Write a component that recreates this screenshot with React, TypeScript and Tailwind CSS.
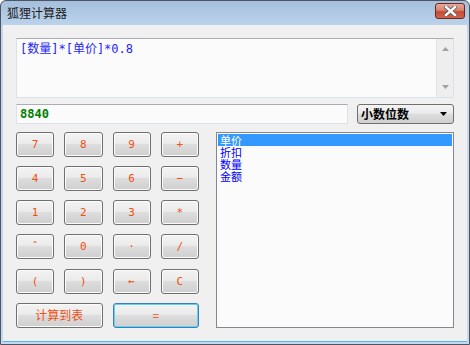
const keys = [
  ["7", "8", "9", "+"],
  ["4", "5", "6", "−"],
  ["1", "2", "3", "*"],
  ["ˆ", "0", "·", "/"],
  ["(", ")", "←", "C"],
];

const fields = ["单价", "折扣", "数量", "金额"];

const mono = { fontFamily: '"DejaVu Sans Mono", "Noto Sans CJK SC", monospace' };
const cjk = { fontFamily: '"Noto Sans CJK SC", "DejaVu Sans", sans-serif' };

function Key({ label, wide, focused }: { label: string; wide?: boolean; focused?: boolean }) {
  return (
    <button
      className={
        "h-[25px] rounded-[3px] border leading-none text-[#f24f12] bg-[linear-gradient(to_bottom,#f3f3f3_0%,#ebebeb_45%,#dddddd_50%,#cfcfcf_100%)] " +
        (focused
          ? "border-[#3c7fb1] shadow-[inset_0_0_0_1px_#5fd3f8] "
          : "border-[#707070] shadow-[inset_0_0_0_1px_#fbfbfb] ") +
        (wide ? "col-span-2 text-[12px]" : "text-[11px]")
      }
      style={wide ? cjk : mono}
    >
      {label}
    </button>
  );
}

export default function App() {
  return (
    <div className="w-[470px] h-[345px] flex flex-col rounded-t-[6px] border border-[#4b5563] bg-[linear-gradient(to_bottom,#a5bfdc,#bcd3ec_25px,#c4d8ee_26px)] overflow-hidden">
      {/* title bar */}
      <div className="h-[24px] flex items-center justify-between pl-[6px] pr-[4px]">
        <span className="text-[12px] text-[#1a1a1a]" style={cjk}>
          狐狸计算器
        </span>
        <div className="w-[30px] h-[16px] mt-[-4px] rounded-[3px] border border-[#6b2a20] flex items-center justify-center bg-[linear-gradient(to_bottom,#e9a99a_0%,#d88170_45%,#c64a33_55%,#d0654c_100%)]">
          <svg width="13" height="10" viewBox="0 0 13 10">
            <path d="M2 1 L11 9 M11 1 L2 9" stroke="#5a5a5a" strokeWidth="4" strokeLinecap="square" />
            <path d="M2 1 L11 9 M11 1 L2 9" stroke="#ffffff" strokeWidth="2.4" strokeLinecap="square" />
          </svg>
        </div>
      </div>

      {/* client area */}
      <div className="flex-1 mx-[2px] mb-[2px] bg-[#f0f0f0] px-[13px] pt-[13px] flex flex-col gap-[6px] border-b border-[#54b6e6]">
        {/* expression box */}
        <div className="h-[60px] flex border border-[#dbe1e8] border-t-[#abadb3] bg-[#fbfbfb]">
          <div className="flex-1 px-[3px] pt-[1px] text-[12px] text-[#1f1fff]" style={mono}>
            [数量]*[单价]*0.8
          </div>
          <div className="w-[17px] flex flex-col items-center justify-between py-[8px] bg-[#eeeeee] border-l border-[#e2e2e2]">
            <svg width="7" height="4" viewBox="0 0 7 4">
              <path d="M0 4 L3.5 0 L7 4 Z" fill="#a0a0a0" />
            </svg>
            <svg width="7" height="4" viewBox="0 0 7 4">
              <path d="M0 0 L3.5 4 L7 0 Z" fill="#a0a0a0" />
            </svg>
          </div>
        </div>

        {/* result + dropdown */}
        <div className="flex gap-[9px] h-[20px]">
          <div className="flex-1 flex items-center px-[3px] border border-[#dbe1e8] border-t-[#abadb3] bg-[#fbfbfb]">
            <span className="text-[12px] font-bold text-[#008000]" style={mono}>
              8840
            </span>
          </div>
          <div className="w-[97px] flex items-center justify-between pl-[3px] pr-[6px] rounded-[3px] border border-[#707070] bg-[linear-gradient(to_bottom,#f3f3f3_0%,#ebebeb_45%,#dddddd_50%,#cfcfcf_100%)]">
            <span className="text-[12px] font-bold text-black" style={cjk}>
              小数位数
            </span>
            <svg width="7" height="4" viewBox="0 0 7 4">
              <path d="M0 0 L3.5 4 L7 0 Z" fill="#000000" />
            </svg>
          </div>
        </div>

        {/* keypad + field list */}
        <div className="flex gap-[17px] mt-[2px]">
          <div className="w-[183px] grid grid-cols-4 gap-x-[10px] gap-y-[9px]">
            {keys.flat().map((k, i) => (
              <Key key={i} label={k} />
            ))}
            <Key label="计算到表" wide />
            <Key label="=" wide focused />
          </div>
          <div className="flex-1 h-[196px] border border-[#828790] bg-[#fbfbfb] p-[1px]">
            {fields.map((f, i) => (
              <div
                key={f}
                className={
                  "h-[12px] pl-[2px] text-[11px] leading-[12px] " +
                  (i === 0 ? "bg-[#3399ff] text-white" : "text-[#0000ff]")
                }
                style={cjk}
              >
                {f}
              </div>
            ))}
          </div>
        </div>
      </div>
    </div>
  );
}
